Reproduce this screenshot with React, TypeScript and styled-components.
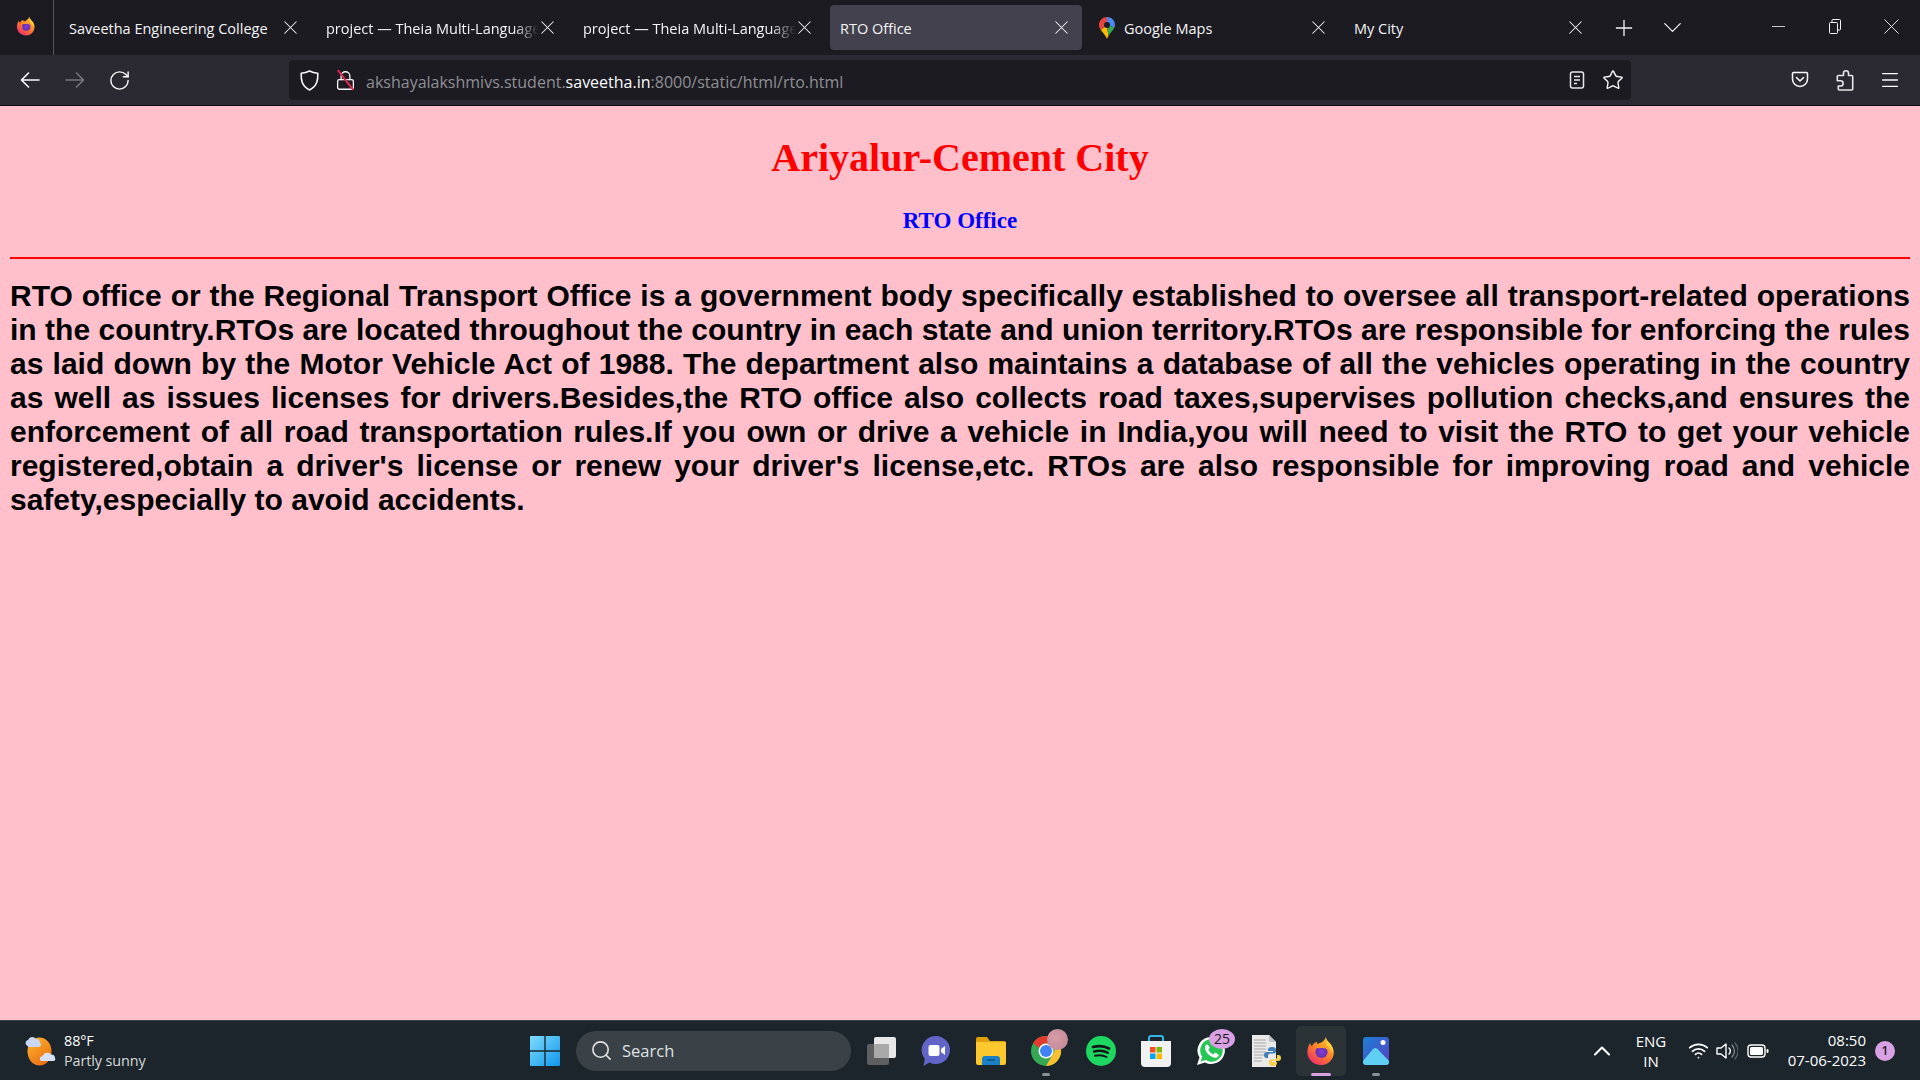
import React from "react";
import styled, { createGlobalStyle } from "styled-components";
import { ChevronDown, ChevronUp, Menu, Minus, Plus, RotateCw, Search, Star, Wifi, X, Lock } from "lucide-react";

const Global = createGlobalStyle`
  html, body { margin: 0; padding: 0; height: 100%; overflow: hidden; background: #ffc0cb; }
  #root { height: 100%; }
`;

const Screen = styled.div`
  width: 1920px; height: 1080px; display: flex; flex-direction: column; overflow: hidden;
  font-family: "Open Sans", "Noto Sans", sans-serif;
`;

/* ---------- Tab strip ---------- */
const TabStrip = styled.div`
  height: 55px; flex: none; background: #1c1b22; display: flex; align-items: center; color: #fbfbfe;
`;
const AppButton = styled.div`
  width: 54px; height: 55px; flex: none; display: flex; align-items: center; justify-content: center;
  border-right: 1px solid #55545c; box-sizing: border-box; padding-bottom: 3px; padding-right: 2px; margin-right: 5px;
`;
const TabSlot = styled.div`
  width: 257px; flex: none; padding-right: 5px; box-sizing: border-box;
`;
const TabBox = styled.div<{ $active?: boolean }>`
  height: 45px; display: flex; align-items: center; padding: 0 13px 0 10px; border-radius: 4px;
  background: ${(p) => (p.$active ? "#42414d" : "transparent")};
`;
const TabFavicon = styled.span`
  width: 16px; height: 22px; margin: 0 9px 0 2px; flex: none; display: flex; align-items: center;
`;
const TabLabel = styled.span<{ $fade?: boolean }>`
  flex: 1; min-width: 0; white-space: nowrap; overflow: hidden; font-size: 14.5px; padding-top: 1px; color: #f4f4f6;
  ${(p) => (p.$fade ? "mask-image: linear-gradient(to right, #000 88%, transparent 100%);" : "")}
`;
const TabClose = styled.span`
  flex: none; width: 16px; height: 16px; display: flex; align-items: center; justify-content: center; color: #f4f4f6;
  svg { flex: none; }
`;
const StripButton = styled.div<{ $w: number }>`
  width: ${(p) => p.$w}px; height: 45px; flex: none; display: flex; align-items: center; justify-content: center; color: #f4f4f6;
`;
const StripSpacer = styled.div`flex: 1;`;
const WindowButton = styled.div`
  width: 56.5px; height: 55px; flex: none; display: flex; align-items: center; justify-content: center; padding-bottom: 3px;
  box-sizing: border-box; color: #f4f4f6;
`;

/* ---------- Toolbar ---------- */
const Toolbar = styled.div`
  height: 50px; flex: none; background: #2b2a33; display: flex; align-items: center; padding: 0 8px 0 7px; box-sizing: border-box;
`;
const NavButton = styled.div<{ $dim?: boolean }>`
  width: 45px; height: 40px; flex: none; display: flex; align-items: center; justify-content: center;
  color: ${(p) => (p.$dim ? "#77767d" : "#fbfbfe")};
`;
const NavGap = styled.div`width: 147px; flex: none;`;
const UrlBar = styled.div`
  width: 1342px; height: 40px; flex: none; background: #1c1b22; border-radius: 4px; display: flex; align-items: center;
  color: #fbfbfe; padding: 0 0 0 2px; box-sizing: border-box;
`;
const UrlIcon = styled.div`
  width: 36px; height: 40px; flex: none; display: flex; align-items: center; justify-content: center; position: relative;
`;
const UrlText = styled.div`
  flex: 1; margin-left: 3px; padding-top: 3px; font-size: 16px; color: #8f8f94; white-space: nowrap;
  span { color: #fbfbfe; }
`;
const ToolbarRight = styled.div`
  flex: 1; display: flex; justify-content: flex-end; color: #fbfbfe;
`;
const Strike = styled.span`
  position: absolute; left: 6px; top: 19px; width: 25px; height: 2px; background: #e22850; transform: rotate(52deg);
`;

/* ---------- Page ---------- */
const Page = styled.main`
  flex: 1; min-height: 0; background: #ffc0cb; border-top: 1px solid #0c0c0d; padding: 0 10px; overflow: hidden;
`;
const Title = styled.h1`
  margin: 29px 0 0; text-align: center; color: #ff0000; font: bold 40px/46px "Liberation Serif", serif;
`;
const SubTitle = styled.h2`
  margin: 27px 0 0; text-align: center; color: #0000ff; font: bold 23px/26px "Liberation Serif", serif;
`;
const Rule = styled.hr`
  margin: 23px 0 0; border: 0; height: 2px; background: #ff0000;
`;
const Body = styled.p`
  margin: 20px 0 0; text-align: justify; color: #000; font: bold 30px/34px "Liberation Sans", Arial, sans-serif;
`;

/* ---------- Taskbar ---------- */
const Taskbar = styled.footer`
  height: 60px; flex: none; background: #1b252b; border-top: 1px solid #3c4147; box-sizing: border-box;
  display: grid; grid-template-columns: 1fr auto 1fr; align-items: center; color: #fff;
`;
const Weather = styled.div`
  display: flex; align-items: center; gap: 8px; padding-left: 24px;
`;
const WeatherText = styled.div`
  font-size: 14.4px; line-height: 20px; letter-spacing: -0.1px;
  small { display: block; font-size: 14.4px; color: #d8dadb; }
`;
const Dock = styled.div`
  display: flex; align-items: center;
`;
const StartButton = styled.div`
  width: 55px; height: 50px; display: flex; align-items: center; justify-content: center; margin-right: 2px;
  padding-right: 3px; box-sizing: border-box;
`;
const SearchBox = styled.div`
  width: 275px; height: 40px; border-radius: 20px; background: #3a4248; display: flex; align-items: center; gap: 9px;
  padding-left: 14px; box-sizing: border-box; font-size: 16.5px; color: #dfe1e2;
`;
const DockItem = styled.div<{ $active?: boolean }>`
  width: 50px; height: 50px; margin-left: 5px; flex: none; display: flex; align-items: center; justify-content: center;
  position: relative; border-radius: 5px;
  ${(p) => (p.$active ? "background: #2b3337;" : "")}
`;
const RunDot = styled.span<{ $active?: boolean }>`
  position: absolute; bottom: 0; left: 50%; transform: translateX(-50%); height: 3px; border-radius: 2px;
  width: ${(p) => (p.$active ? 20 : 8)}px; background: ${(p) => (p.$active ? "#d9a0e3" : "#8a9094")};
`;
const CountBadge = styled.span`
  position: absolute; top: 3px; right: 1px; width: 26px; height: 20px; border-radius: 50%; background: #d9a0e3;
  color: #1b1b1b; font-size: 14px; line-height: 20px; text-align: center;
`;
const AvatarBadge = styled.span`
  position: absolute; top: 3px; right: 3px; width: 21px; height: 21px; border-radius: 50%;
  background: radial-gradient(circle at 40% 40%, #d79aa6, #c78f9c 60%, #b98ca0);
`;
const Tray = styled.div`
  display: flex; align-items: center; justify-content: flex-end; padding-right: 25px;
`;
const TrayIcon = styled.div<{ $w: number }>`
  width: ${(p) => p.$w}px; height: 40px; flex: none; display: flex; align-items: center; justify-content: center;
`;
const Lang = styled.div`
  width: 58px; text-align: center; font-size: 15px; line-height: 20px; margin-right: 3px;
`;
const Clock = styled.div`
  width: 91px; text-align: right; font-size: 15px; line-height: 20px; padding-bottom: 2px;
`;
const Notify = styled.div`
  width: 20px; height: 20px; margin-left: 9px; border-radius: 50%; background: #d9a0e3; color: #1b1b1b; font-size: 12px;
  display: flex; align-items: center; justify-content: center; font-weight: 600;
`;

/* ---------- Drawings ---------- */
const FirefoxLogo = ({ size, id }: { size: number; id: string }) => (
  <svg width={size} height={size} viewBox="0 0 32 32">
    <defs>
      <linearGradient id={`${id}a`} x1="0.8" y1="0.1" x2="0.2" y2="0.95">
        <stop offset="0" stopColor="#ffc52e" />
        <stop offset="0.5" stopColor="#ff7a2a" />
        <stop offset="1" stopColor="#ee2f6e" />
      </linearGradient>
      <radialGradient id={`${id}b`} cx="0.5" cy="0.5" r="0.55">
        <stop offset="0" stopColor="#8a3bd1" />
        <stop offset="1" stopColor="#5b2fb0" />
      </radialGradient>
    </defs>
    <path d="M21 1c1 4 3.500 5 6 8.500 3 4.200 3.500 9 1.500 13.500C26 28.500 21 31 16 31 8 31 1.500 24.800 1.500 17 1.500 13 3 9.500 4.500 7.500c.3 1.500.8 2.500 1.800 3.300C7.500 8.500 9.500 6.500 12 6.500c-.5 1-.5 1.500 0 2 2-.8 8-2 9-7.500z" fill={`url(#${id}a)`} />
    <path d="M21 2c1 4 4 5 6 8 1.500 2.500 2 5.500 1 8-1-4-3.500-6.500-6-8 1-2.500 0-5.500-1-8z" fill="#ffd03a" />
    <circle cx="16.500" cy="17" r="6.500" fill={`url(#${id}b)`} />
    <path d="M9.500 13c2-2.500 5-3.500 8-3 3 .6 5.500 2.800 6.300 5.500-1.800-2.200-4.500-3-7.300-2.700-2.500.3-5 0-7 .2z" fill="#ff9a2a" />
  </svg>
);

const MapsPin = () => (
  <svg width="16" height="22" viewBox="0 0 16 22">
    <path d="M8 0C3.600 0 0 3.500 0 7.900c0 2 .7 3.400 1.800 5L8 8z" fill="#e8453c" />
    <path d="M8 0c4.400 0 8 3.500 8 7.900 0 .9-.2 1.800-.5 2.500L8 8z" fill="#4a89f3" />
    <path d="M1.800 12.900C3.500 15.300 6.500 18 8 22c.3-1 .8-2 1.400-3L8 8z" fill="#fbbc05" />
    <path d="M15.500 10.400c-.8 2.300-4.500 5.300-6.100 8.600L8 8z" fill="#34a853" />
    <circle cx="8" cy="8" r="3" fill="#1c1b22" />
  </svg>
);

const BackArrow = ({ flip }: { flip?: boolean }) => (
  <svg width="20" height="16" viewBox="0 0 20 16" fill="none" stroke="currentColor" strokeWidth="1.600" strokeLinecap="round" strokeLinejoin="round"
    transform={flip ? "scale(-1 1)" : undefined}>
    <path d="M19 8H1.500M8.500 1 1.500 8l7 7" />
  </svg>
);

const ShieldIcon = () => (
  <svg width="19" height="21" viewBox="0 0 19 21" fill="none" stroke="#fbfbfe" strokeWidth="1.600" strokeLinejoin="round">
    <path d="M9.500 1C7 2.300 4 3 1.200 3.200 1 9 1.300 16 9.500 20 17.700 16 18 9 17.800 3.200 15 3 12 2.300 9.500 1z" />
  </svg>
);

const ReaderIcon = () => (
  <svg width="16" height="18" viewBox="0 0 16 18" fill="none" stroke="#e6e6e9" strokeWidth="1.500">
    <rect x="1.500" y="1" width="13" height="16" rx="2" />
    <path d="M5 5.500h6M5 9h6M5 12.500h3" />
  </svg>
);

const PocketIcon = () => (
  <svg width="18" height="18" viewBox="0 0 18 18" fill="none" stroke="#fbfbfe" strokeWidth="1.500" strokeLinecap="round" strokeLinejoin="round">
    <path d="M2.500 1.500h13a1.500 1.500 0 0 1 1 1v5.500a7.500 7.500 0 0 1-15 0V2.500a1.500 1.500 0 0 1 1-1z" />
    <path d="M5.500 6.500 9 10l3.500-3.500" />
  </svg>
);

const PuzzleIcon = () => (
  <svg width="18" height="21" viewBox="0 0 18 21" fill="none" stroke="#e6e6e9" strokeWidth="1.600" strokeLinejoin="round">
    <path d="M7.500 5.500V3.300a2.500 2.500 0 0 1 5 0v2.200h3.200a1 1 0 0 1 1 1V19a1 1 0 0 1-1 1H3.300a1 1 0 0 1-1-1v-3h2.200a2.600 2.600 0 0 0 0-5.200H1.300V6.500a1 1 0 0 1 1-1z" />
  </svg>
);

const RestoreIcon = () => (
  <svg width="12" height="15" viewBox="0 0 12 15" fill="none" stroke="#f4f4f6" strokeWidth="1">
    <rect x="0.500" y="3.500" width="8" height="11" rx="1" />
    <path d="M3 3V1.500a1 1 0 0 1 1-1h6.500a1 1 0 0 1 1 1V10a1 1 0 0 1-1 1H9" />
  </svg>
);

const WeatherIcon = () => (
  <svg width="32" height="30" viewBox="0 0 32 30">
    <defs>
      <linearGradient id="sun" x1="0.2" y1="0" x2="0.8" y2="1">
        <stop offset="0" stopColor="#fbb32a" />
        <stop offset="1" stopColor="#ec6a12" />
      </linearGradient>
    </defs>
    <ellipse cx="15.500" cy="15.500" rx="12" ry="14" fill="url(#sun)" />
    <path d="M3 9.500a3 3 0 0 1 1-5.500 4.500 4.500 0 0 1 8-1 3.500 3.500 0 0 1 4 3.500 2.500 2.500 0 0 1-1 4.500H4.500z" fill="#c9d7f4" />
    <path d="M17 25a2.800 2.800 0 0 1 1.500-5 5 5 0 0 1 8.500-1.500 3.500 3.500 0 0 1 4 3.500 2.200 2.200 0 0 1-1 3z" fill="#d5e0f7" />
  </svg>
);

const WindowsLogo = () => (
  <svg width="30" height="30" viewBox="0 0 30 30">
    <defs>
      <linearGradient id="win" x1="0" y1="0" x2="1" y2="1">
        <stop offset="0" stopColor="#7fdcfb" />
        <stop offset="1" stopColor="#0f97ee" />
      </linearGradient>
    </defs>
    <path d="M0 1a1 1 0 0 1 1-1h13.300v14.300H0zM15.700 0H29a1 1 0 0 1 1 1v13.300H15.700zM0 15.700h14.300V30H1a1 1 0 0 1-1-1zM15.700 15.700H30V29a1 1 0 0 1-1 1H15.700z" fill="url(#win)" />
  </svg>
);

const TaskViewIcon = () => (
  <svg width="30" height="30" viewBox="0 0 30 30">
    <rect x="1" y="8" width="22" height="21" rx="2" fill="#5d5f60" />
    <rect x="8" y="1" width="22" height="21" rx="2" fill="#e8e8e8" />
    <rect x="8" y="8" width="15" height="14" rx="1" fill="#a9a9a9" />
  </svg>
);

const TeamsIcon = () => (
  <svg width="30" height="32" viewBox="0 0 30 32">
    <path d="M15 1a14 14 0 1 1-6.500 26.400L2.500 31l1.300-7.200A14 14 0 0 1 15 1z" fill="#6264c8" />
    <rect x="7.500" y="10" width="11" height="11" rx="2" fill="#fff" />
    <path d="M20 14l4-3v9l-4-3z" fill="#fff" />
  </svg>
);

const FolderIcon = () => (
  <svg width="30" height="28" viewBox="0 0 30 28">
    <path d="M0 2a2 2 0 0 1 2-2h9l3 4h14a2 2 0 0 1 2 2v4H0z" fill="#e0a008" />
    <path d="M0 5h30v21a2 2 0 0 1-2 2H2a2 2 0 0 1-2-2z" fill="#fdc72e" />
    <path d="M6 22a3 3 0 0 1 3-3h12a3 3 0 0 1 3 3v6H6z" fill="#1a80c8" />
    <path d="M11 23h8" stroke="#0c4f85" strokeWidth="1.500" />
  </svg>
);

const ChromeIcon = () => (
  <svg width="32" height="32" viewBox="0 0 32 32">
    <circle cx="16" cy="16" r="15" fill="#34a853" />
    <path d="M16 1a15 15 0 0 1 13 7.500H16a7.500 7.500 0 0 0-7 4.700L3 8A15 15 0 0 1 16 1z" fill="#e33b2e" />
    <path d="M29 8.500A15 15 0 0 1 16 31l6.500-11.300A7.500 7.500 0 0 0 22 8.500z" fill="#fbc02d" />
    <circle cx="16" cy="16" r="7.500" fill="#fff" />
    <circle cx="16" cy="16" r="6" fill="#3f84f2" />
  </svg>
);

const SpotifyIcon = () => (
  <svg width="30" height="30" viewBox="0 0 30 30" fill="none" stroke="#10151a" strokeLinecap="round">
    <circle cx="15" cy="15" r="15" fill="#1ed760" stroke="none" />
    <path d="M7 11c6-1.500 11.500-1 16 1.500" strokeWidth="2.800" />
    <path d="M8 15.500c5-1.200 10-.8 13.800 1.300" strokeWidth="2.400" />
    <path d="M9 19.800c4.200-1 8.300-.6 11.500 1.200" strokeWidth="2" />
  </svg>
);

const StoreIcon = () => (
  <svg width="30" height="32" viewBox="0 0 30 32">
    <path d="M8 6V3a2 2 0 0 1 2-2h10a2 2 0 0 1 2 2v3" fill="none" stroke="#35b6ea" strokeWidth="2" />
    <path d="M0 6h30v22a4 4 0 0 1-4 4H4a4 4 0 0 1-4-4z" fill="#f2f2f2" />
    <rect x="9" y="12" width="5.500" height="5.500" fill="#f25022" />
    <rect x="15.500" y="12" width="5.500" height="5.500" fill="#7fba00" />
    <rect x="9" y="18.500" width="5.500" height="5.500" fill="#00a4ef" />
    <rect x="15.500" y="18.500" width="5.500" height="5.500" fill="#ffb900" />
  </svg>
);

const WhatsAppIcon = () => (
  <svg width="30" height="30" viewBox="0 0 30 30">
    <path d="M15.500 1A13.500 13.500 0 1 1 9 26.400L1 29l2.500-7.500A13.500 13.500 0 0 1 15.500 1z" fill="#fff" />
    <path d="M15.500 3.300A11.200 11.200 0 1 1 9.600 24l-5 1.600 1.600-4.800A11.200 11.200 0 0 1 15.500 3.300z" fill="#27c654" />
    <path d="M11 8.500c-.8 0-2 1.200-2 3.200 0 4.500 6 10 10.500 10 2 0 3.300-1.500 3.300-2.500 0-.8-3-2.500-3.700-2.500-.7 0-1.200 1.500-1.800 1.500-1.500 0-4.800-3.200-4.800-4.700 0-.7 1.200-1.200 1.200-1.800 0-.7-1.600-3.200-2.700-3.200z" fill="#fff" />
  </svg>
);

const PythonFileIcon = () => (
  <svg width="30" height="32" viewBox="0 0 30 32">
    <path d="M1 0h17l7 7v25H1z" fill="#e9e9e9" />
    <path d="M18 0l7 7h-7z" fill="#bfc3c8" />
    <path d="M3 5h12M3 8h12M3 11h12M3 14h12M3 17h12M3 20h10M3 23h8M3 26h8" stroke="#aaa" strokeWidth="1" />
    <path d="M21 12c-3 0-4 1-4 3v1h5v1h-6c-2 0-3 1-3 3s1 3 2.500 3H17v-2c0-1.500 1-2.500 2.500-2.500H23c1 0 2-1 2-2V15c0-2-1-3-4-3z" fill="#3f7fb8" />
    <path d="M22 31c3 0 4-1 4-3v-1h-5v-1h6c2 0 3-1 3-3s-1-3-2.500-3H26v2c0 1.500-1 2.500-2.500 2.500H20c-1 0-2 1-2 2V28c0 2 1 3 4 3z" fill="#f7cf4a" />
  </svg>
);

const PhotosIcon = () => (
  <svg width="26" height="28" viewBox="0 0 26 28">
    <defs>
      <linearGradient id="ph" x1="0" y1="0" x2="1" y2="1">
        <stop offset="0" stopColor="#1b7fd6" />
        <stop offset="1" stopColor="#5a3fc2" />
      </linearGradient>
    </defs>
    <rect width="26" height="28" rx="3" fill="url(#ph)" />
    <circle cx="20" cy="5.500" r="2.500" fill="#fff" />
    <path d="M0 24l10-12c1.500-1.500 3-1.500 4.500 0L26 24v1a3 3 0 0 1-3 3H3a3 3 0 0 1-3-3z" fill="#5fd0f3" />
  </svg>
);

const SpeakerIcon = () => (
  <svg width="22" height="20" viewBox="0 0 22 20" fill="none" strokeLinecap="round" strokeLinejoin="round">
    <path d="M1 7v6h4l5 4V3L5 7z" stroke="#fff" strokeWidth="1.400" />
    <path d="M13 7a4 4 0 0 1 0 6" stroke="#fff" strokeWidth="1.400" />
    <path d="M16 4a8.500 8.500 0 0 1 0 12" stroke="#8b9195" strokeWidth="1.200" />
    <path d="M19 2a12 12 0 0 1 0 16" stroke="#5c6368" strokeWidth="1.200" />
  </svg>
);

const BatteryIcon = () => (
  <svg width="22" height="14" viewBox="0 0 22 14">
    <rect x="1" y="1" width="17" height="12" rx="3" fill="none" stroke="#fff" strokeWidth="1.400" />
    <rect x="3" y="3" width="13" height="8" rx="1.500" fill="#fff" />
    <rect x="19.500" y="5" width="2" height="4" rx="1" fill="#fff" />
  </svg>
);

/* ---------- Data ---------- */
const tabs = [
  { title: "Saveetha Engineering College" },
  { title: "project — Theia Multi-Language", fade: true },
  { title: "project — Theia Multi-Language", fade: true },
  { title: "RTO Office", active: true },
  { title: "Google Maps", maps: true },
  { title: "My City" },
];

const paragraph =
  "RTO office or the Regional Transport Office is a government body specifically established to oversee all transport-related operations in the country.RTOs are located throughout the country in each state and union territory.RTOs are responsible for enforcing the rules as laid down by the Motor Vehicle Act of 1988. The department also maintains a database of all the vehicles operating in the country as well as issues licenses for drivers.Besides,the RTO office also collects road taxes,supervises pollution checks,and ensures the enforcement of all road transportation rules.If you own or drive a vehicle in India,you will need to visit the RTO to get your vehicle registered,obtain a driver's license or renew your driver's license,etc. RTOs are also responsible for improving road and vehicle safety,especially to avoid accidents.";

export default function App() {
  return (
    <Screen>
      <Global />
      <TabStrip>
        <AppButton><FirefoxLogo size={20} id="ffa" /></AppButton>
        {tabs.map((t, i) => (
          <TabSlot key={i}>
            <TabBox $active={t.active}>
              {t.maps && <TabFavicon><MapsPin /></TabFavicon>}
              <TabLabel $fade={t.fade}>{t.title}</TabLabel>
              <TabClose><X size={23} strokeWidth={1.1} /></TabClose>
            </TabBox>
          </TabSlot>
        ))}
        <StripButton $w={46}><Plus size={26} strokeWidth={1.2} /></StripButton>
        <StripButton $w={50}><ChevronDown size={31} strokeWidth={1} /></StripButton>
        <StripSpacer />
        <WindowButton><Minus size={21} strokeWidth={0.9} /></WindowButton>
        <WindowButton><RestoreIcon /></WindowButton>
        <WindowButton><X size={27} strokeWidth={0.8} /></WindowButton>
      </TabStrip>
      <Toolbar>
        <NavButton><BackArrow /></NavButton>
        <NavButton $dim><BackArrow flip /></NavButton>
        <NavButton><RotateCw size={23} strokeWidth={1.5} /></NavButton>
        <NavGap />
        <UrlBar>
          <UrlIcon><ShieldIcon /></UrlIcon>
          <UrlIcon><Lock size={21} strokeWidth={1.5} /><Strike /></UrlIcon>
          <UrlText>akshayalakshmivs.student.<span>saveetha.in</span>:8000/static/html/rto.html</UrlText>
          <UrlIcon><ReaderIcon /></UrlIcon>
          <UrlIcon><Star size={22} strokeWidth={1.5} /></UrlIcon>
        </UrlBar>
        <ToolbarRight>
          <NavButton><PocketIcon /></NavButton>
          <NavButton><PuzzleIcon /></NavButton>
          <NavButton><Menu size={22} strokeWidth={1.5} /></NavButton>
        </ToolbarRight>
      </Toolbar>
      <Page>
        <Title>Ariyalur-Cement City</Title>
        <SubTitle>RTO Office</SubTitle>
        <Rule />
        <Body>{paragraph}</Body>
      </Page>
      <Taskbar>
        <Weather>
          <WeatherIcon />
          <WeatherText>88°F<small>Partly sunny</small></WeatherText>
        </Weather>
        <Dock>
          <StartButton><WindowsLogo /></StartButton>
          <SearchBox><Search size={23} strokeWidth={1.7} />Search</SearchBox>
          <DockItem><TaskViewIcon /></DockItem>
          <DockItem><TeamsIcon /></DockItem>
          <DockItem><FolderIcon /></DockItem>
          <DockItem><ChromeIcon /><AvatarBadge /><RunDot /></DockItem>
          <DockItem><SpotifyIcon /></DockItem>
          <DockItem><StoreIcon /></DockItem>
          <DockItem><WhatsAppIcon /><CountBadge>25</CountBadge></DockItem>
          <DockItem><PythonFileIcon /></DockItem>
          <DockItem $active><FirefoxLogo size={30} id="ffb" /><RunDot $active /></DockItem>
          <DockItem><PhotosIcon /><RunDot /></DockItem>
        </Dock>
        <Tray>
          <TrayIcon $w={40}><ChevronUp size={28} strokeWidth={1.8} /></TrayIcon>
          <Lang>ENG<br />IN</Lang>
          <TrayIcon $w={30}><Wifi size={21} strokeWidth={2} /></TrayIcon>
          <TrayIcon $w={28}><SpeakerIcon /></TrayIcon>
          <TrayIcon $w={34}><BatteryIcon /></TrayIcon>
          <Clock>08:50<br />07-06-2023</Clock>
          <Notify>1</Notify>
        </Tray>
      </Taskbar>
    </Screen>
  );
}
